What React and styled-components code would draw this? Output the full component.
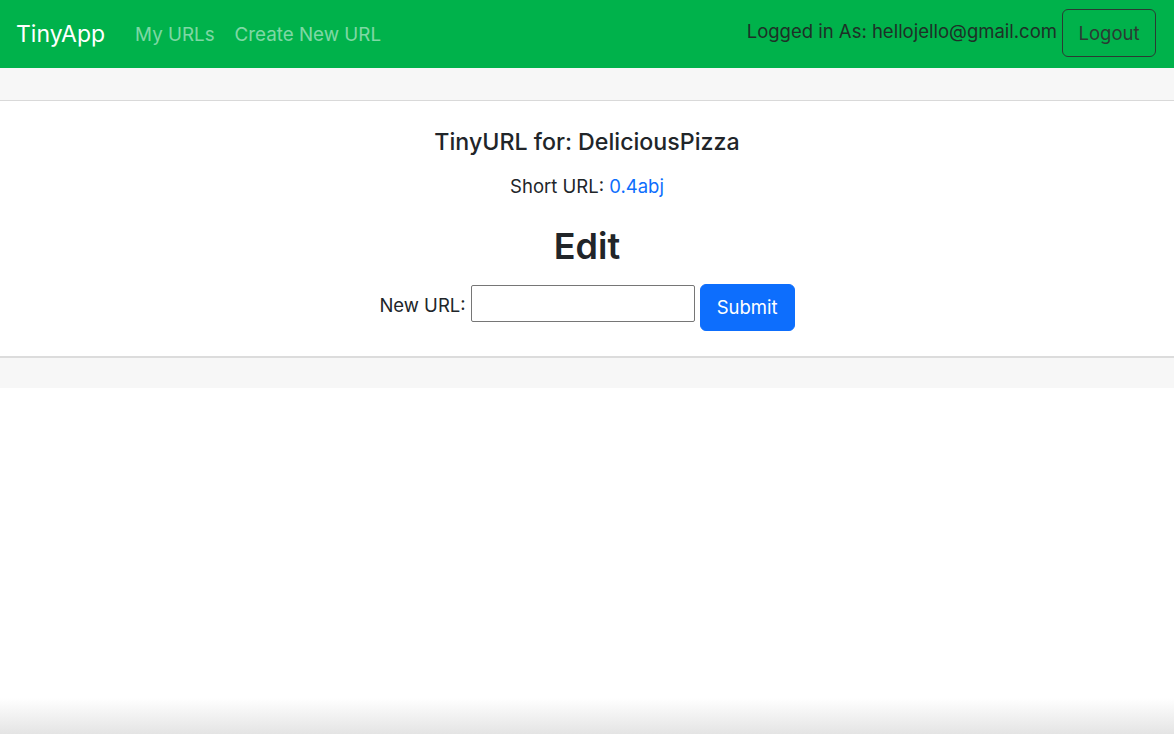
import styled, { createGlobalStyle } from 'styled-components';

const GlobalStyle = createGlobalStyle`
  html, body {
    margin: 0;
    padding: 0;
  }
  body {
    font-family: Inter, "Noto Sans", "Liberation Sans", sans-serif;
    font-size: 18.5px;
    color: #212529;
    background: #ffffff;
  }
`;

const Page = styled.div`
  min-height: 100vh;
  display: flex;
  flex-direction: column;
  background: linear-gradient(to bottom, #ffffff calc(100% - 36px), #e4e4e4 100%);
`;

const Navbar = styled.nav`
  height: 68px;
  background: #00b24b;
  display: flex;
  align-items: center;
  padding: 0 18px 0 16px;
  box-sizing: border-box;
`;

const Brand = styled.a`
  font-size: 23px;
  color: #ffffff;
  text-decoration: none;
  margin-right: 20px;
`;

const NavLink = styled.a`
  color: rgba(255, 255, 255, 0.5);
  text-decoration: none;
  font-size: 18.8px;
  padding: 0 10px;
  margin-top: 1px;
`;

const Spacer = styled.div`
  flex: 1;
`;

const UserText = styled.span`
  color: #1e3027;
  margin-right: 5px;
  margin-bottom: 7px;
`;

const OutlineButton = styled.button`
  font-family: inherit;
  font-size: 18.5px;
  color: #2b3b33;
  background: transparent;
  border: 1px solid #2b3b33;
  border-radius: 6px;
  height: 48px;
  width: 94px;
  padding: 0;
  margin-bottom: 2px;
`;

const Card = styled.div`
  display: flex;
  flex-direction: column;
`;

const CardHeader = styled.div`
  height: 32px;
  background: #f7f7f7;
  border-bottom: 1px solid #d9d9d9;
`;

const CardBody = styled.div`
  padding: 27px 20px 25px;
  text-align: center;
`;

const Title = styled.h5`
  margin: 0;
  font-size: 23.2px;
  font-weight: 500;
  line-height: 1.2;
  padding-top: 1px;
`;

const ShortLine = styled.p`
  margin: 16px 0 0;
  line-height: 1.5;
`;

const ShortLink = styled.a`
  color: #0d6efd;
  text-decoration: none;
`;

const Heading = styled.h2`
  margin: 24px 0 0;
  font-size: 36px;
  font-weight: 600;
  line-height: 1.2;
`;

const Form = styled.form`
  margin-top: 16px;
  display: flex;
  justify-content: center;
  align-items: center;
  gap: 5px;
`;

const Label = styled.label`
  margin-bottom: 4px;
`;

const Input = styled.input`
  width: 224px;
  height: 37px;
  box-sizing: border-box;
  border: 1px solid #767676;
  border-radius: 2px;
  font-family: inherit;
  font-size: 16px;
  padding: 2px 6px;
  margin-bottom: 7px;
`;

const PrimaryButton = styled.button`
  font-family: inherit;
  font-size: 18.5px;
  color: #ffffff;
  background: #0d6efd;
  border: 1px solid #0d6efd;
  border-radius: 6px;
  height: 47px;
  width: 95px;
  padding: 0;
`;

const CardFooter = styled.div`
  height: 30px;
  background: #f7f7f7;
  border-top: 2px solid #dcdcdc;
`;

export default function App() {
  return (
    <>
      <GlobalStyle />
      <Page>
        <Navbar>
          <Brand href="#">TinyApp</Brand>
          <NavLink href="#">My URLs</NavLink>
          <NavLink href="#">Create New URL</NavLink>
          <Spacer />
          <UserText>Logged in As: hellojello@gmail.com</UserText>
          <OutlineButton>Logout</OutlineButton>
        </Navbar>
        <Card>
          <CardHeader />
          <CardBody>
            <Title>TinyURL for: DeliciousPizza</Title>
            <ShortLine>
              Short URL: <ShortLink href="#">0.4abj</ShortLink>
            </ShortLine>
            <Heading>Edit</Heading>
            <Form onSubmit={(e) => e.preventDefault()}>
              <Label>New URL:</Label>
              <Input type="text" />
              <PrimaryButton type="submit">Submit</PrimaryButton>
            </Form>
          </CardBody>
          <CardFooter />
        </Card>
      </Page>
    </>
  );
}
